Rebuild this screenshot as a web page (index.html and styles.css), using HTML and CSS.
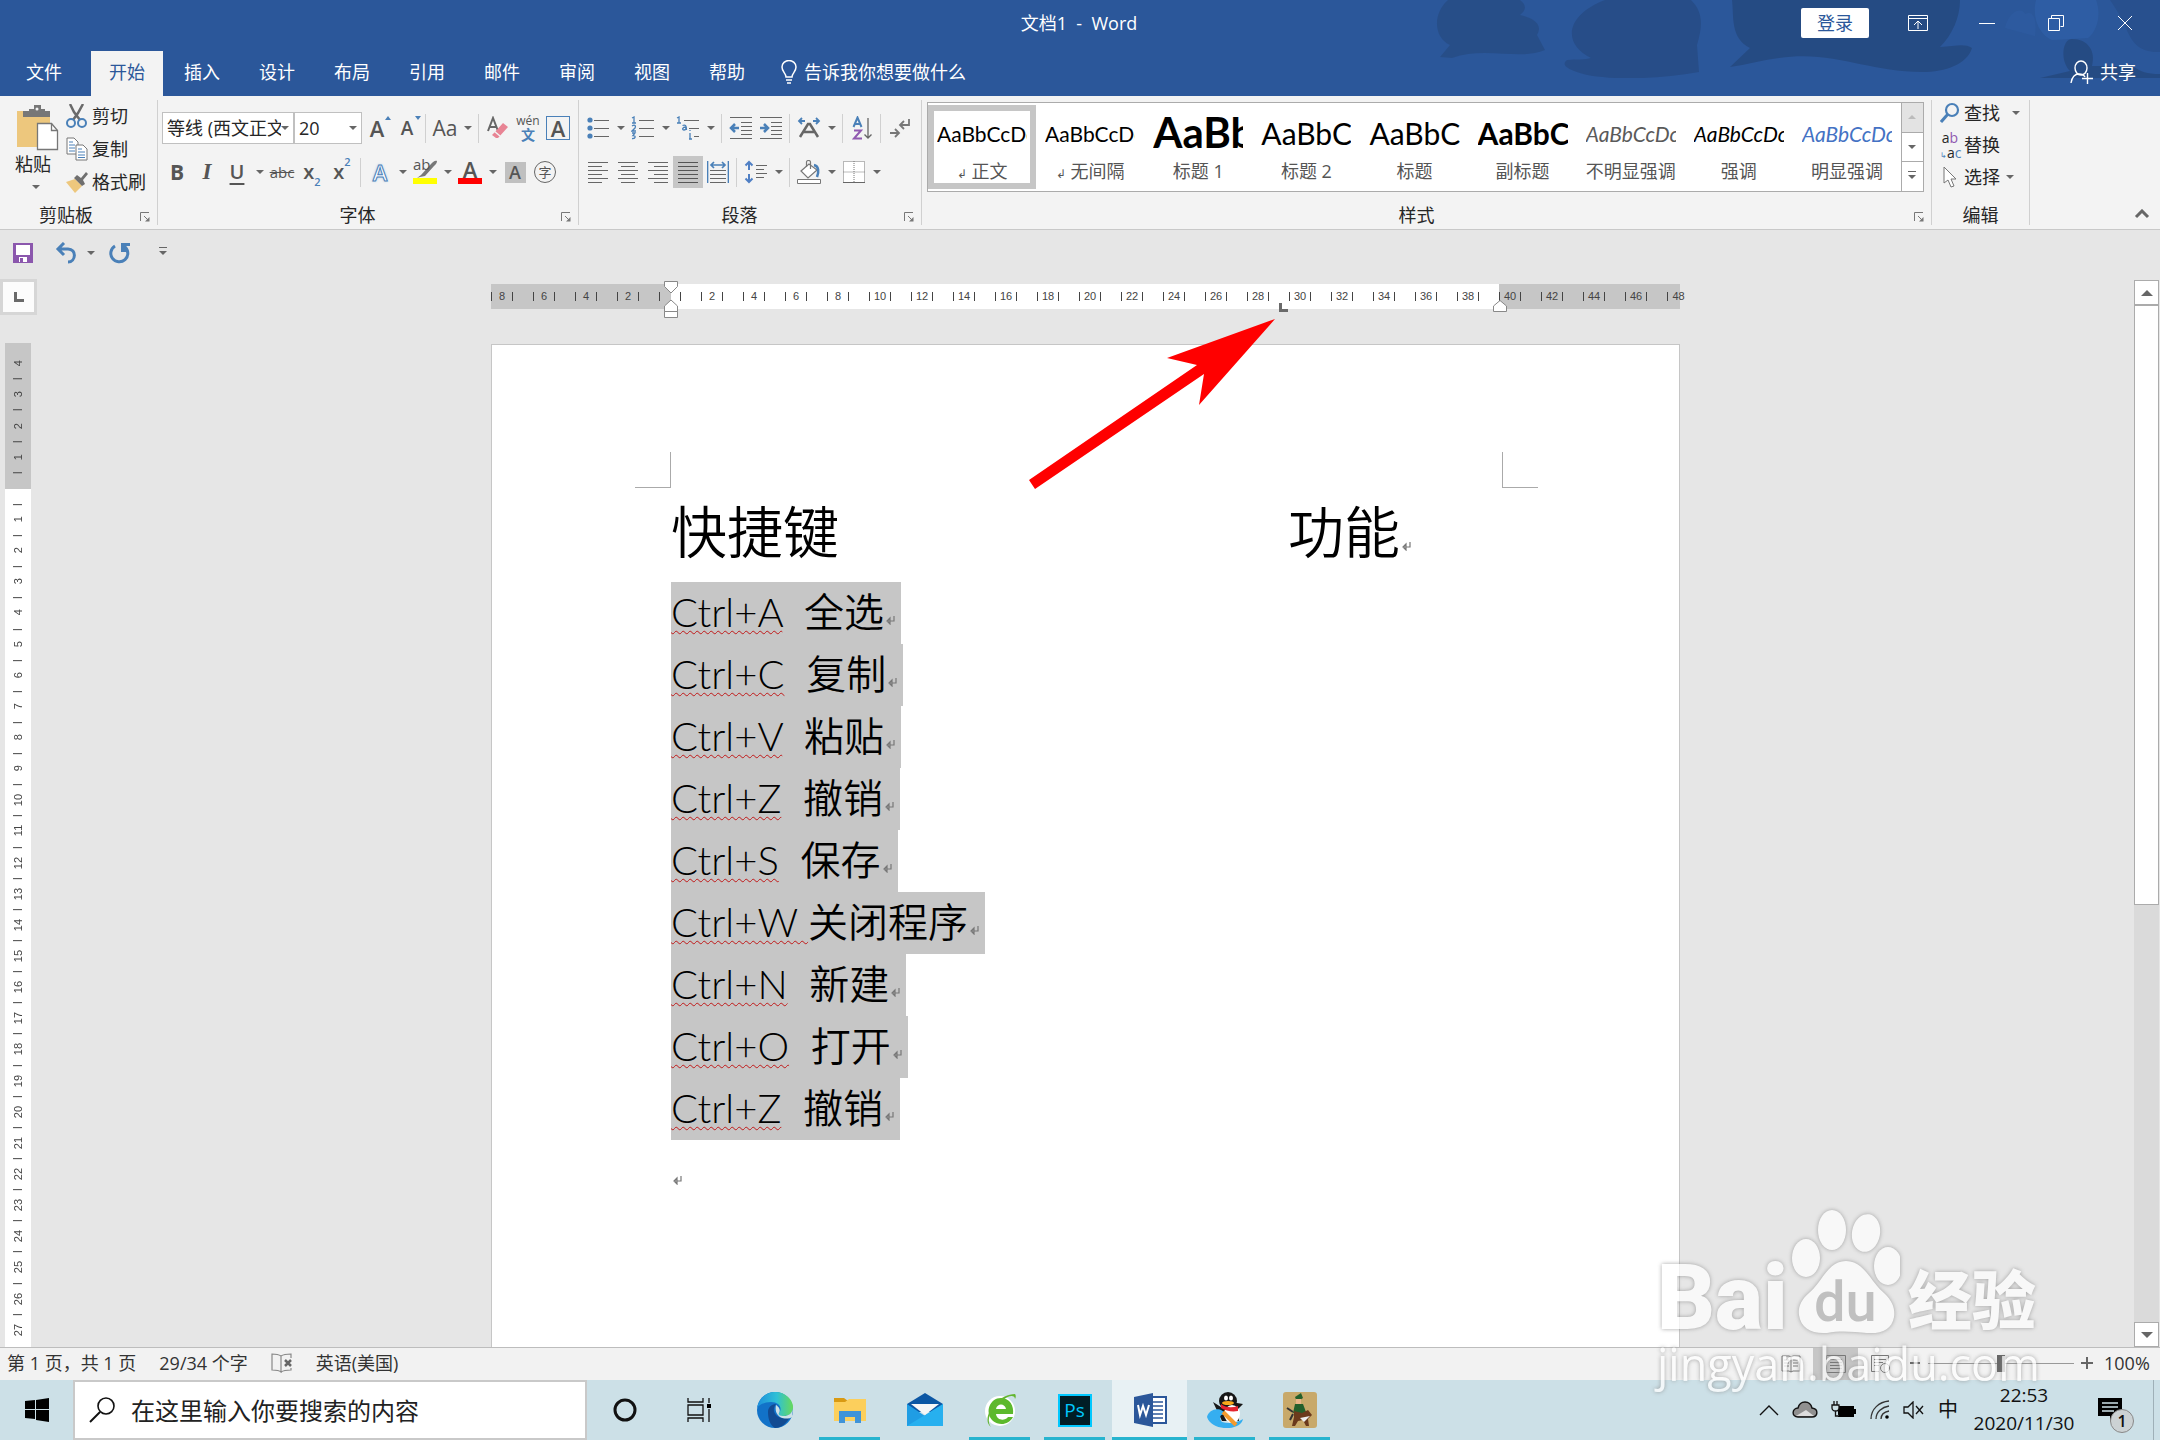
FILE: index.html
```html
<!DOCTYPE html>
<html lang="zh-CN">

<head>
    <meta charset="UTF-8">
    <meta name="viewport" content="width=device-width, initial-scale=1.0">
    <title>文档1 - Word</title>
    <link rel="stylesheet" href="styles.css">
</head>

<body>
    <svg class="defs" aria-hidden="true">
        <symbol id="mark" viewBox="0 0 9 9"><path d="M8 0v5H2M4 2L1 5l3 3z" fill="none" stroke="#777" stroke-width="1.2" /></symbol>
        <symbol id="launch" viewBox="0 0 10 10"><path d="M.5 9V.5H9M4 4l4 4" fill="none" stroke="#777" /><path d="M9.500 5v4.500H5z" fill="#777" /></symbol>
    </svg>

    <header class="top">
        <svg class="top-art" viewBox="0 0 730 78" aria-hidden="true">
            <g fill="#25497f">
                <path d="M18 0h72c8 6 5 11 0 15 18 4 22 12 17 20l8 15c-25 11-60-4-93 8l-12-1 10-12C4 38 2 14 18 0z" opacity=".75" />
                <path d="M175 0h86c12 12 12 25 6 45l2 27c-50 9-105 8-125-1-9-4-12-7-7-11 10-1 18 0 24-2C130 42 138 14 175 0z" opacity=".8" />
                <path d="M302 0h228c0 18-8 35-20 47 15-1 25-4 32 1-5 16-26 24-50 24-55 0-88-22-143-14-18 2-32 7-49 9l20-19C300 38 304 16 302 0z" />
                <path d="M642 39c16 0 24 12 20 27h40c10 6 14 8 28 8v4H610l30-7c-10-10-8-32 2-32z" />
                <path d="M680 0h50v52c-20 1-28-9-34-24-3-8-8-16-16-28z" opacity=".55" />
            </g>
            <path d="M606 0h60c6 16 0 32-8 38l-36 2c-14-6-20-24-16-40z" fill="#3162ab" opacity=".7" />
            <path d="M575 28c5-20 18-20 20-14 8-4 12 4 10 22z" fill="#3162ab" opacity=".4" />
        </svg>
        <div class="title-bar">
            <h1 class="window-title">文档1&nbsp; -&nbsp; Word</h1>
            <div class="window-tools">
                <button class="login">登录</button>
                <button class="win" aria-label="功能区显示选项"><svg width="20" height="16"><path d="M.5.500h19v15H.5zM.5 3.500h19M10 14V6M6 10l4-4 4 4" fill="none" stroke="#fff" /></svg></button>
                <button class="win" aria-label="最小化"><svg width="16" height="16"><path d="M0 8.500h16" stroke="#fff" /></svg></button>
                <button class="win" aria-label="还原"><svg width="16" height="16"><path d="M.5 3.500h11v12H.5zM3.500 3V.5h12v11h-3" fill="none" stroke="#fff" /></svg></button>
                <button class="win" aria-label="关闭"><svg width="16" height="16"><path d="M1 1l14 14M15 1L1 15" stroke="#fff" /></svg></button>
            </div>
        </div>
        <nav class="tabs">
            <a href="#" class="tab file">文件</a>
            <a href="#" class="tab active">开始</a>
            <a href="#" class="tab">插入</a>
            <a href="#" class="tab">设计</a>
            <a href="#" class="tab">布局</a>
            <a href="#" class="tab">引用</a>
            <a href="#" class="tab">邮件</a>
            <a href="#" class="tab">审阅</a>
            <a href="#" class="tab">视图</a>
            <a href="#" class="tab">帮助</a>
            <a href="#" class="tell"><svg width="18" height="24" viewBox="0 0 18 24"><path d="M6 17c0-4-4-5-4-10a7 6.500 0 0 1 14 0c0 5-4 6-4 10zM6 20h6M7 23h4" fill="none" stroke="#fff" stroke-width="1.500" /></svg>告诉我你想要做什么</a>
            <a href="#" class="share"><svg width="24" height="25" viewBox="0 0 24 25"><path d="M1 23c1-6 4-9 8-9 3 0 5 1 6 3" fill="none" stroke="#fff" stroke-width="1.400" /><ellipse cx="11" cy="8" rx="6" ry="7" fill="none" stroke="#fff" stroke-width="1.400" /><path d="M12 18.500h11M17.500 13v11" stroke="#fff" stroke-width="1.400" /></svg>共享</a>
        </nav>
    </header>

    <section class="ribbon">
        <div class="group clipboard">
            <div class="clip-body">
                <button class="paste">
                    <svg width="42" height="46" viewBox="0 0 42 46"><path d="M0 6h33v36H0z" fill="#edc77d" /><path d="M6 6h6V4h5V0h7v4h4v2h5v6H6z" fill="#777" /><circle cx="20" cy="4" r="1.500" fill="#f3f3f3" /><path d="M20.500 18.500h14l6 7v19h-20z" fill="#fff" stroke="#777" stroke-width="1.300" /><path d="M34.500 18.500v7h6" fill="none" stroke="#777" stroke-width="1.300" /></svg>
                    <span>粘贴</span>
                    <i class="caret"></i>
                </button>
                <div class="clip-list">
                    <button class="line-btn"><svg width="22" height="24" viewBox="0 0 22 24"><path d="M4 0l4 8 6 8M17 0l-5 9-5 7" stroke="#6a6a6a" stroke-width="2.500" fill="none" /><g fill="none" stroke="#4a80b8" stroke-width="2"><circle cx="5" cy="19" r="4" /><circle cx="16" cy="19" r="4" /></g></svg>剪切</button>
                    <button class="line-btn"><svg width="22" height="24" viewBox="0 0 22 24"><path d="M1 1h7l4 4v12H1z" fill="#fff" stroke="#777" /><path d="M3 5h4M3 8h6M3 11h6M3 14h6" stroke="#4a80b8" /><path d="M10 8h7l4 4v11H10z" fill="#fff" stroke="#777" /><path d="M12 12h4M12 15h7M12 18h7M12 20.500h7" stroke="#4a80b8" /></svg>复制</button>
                    <button class="line-btn"><svg width="22" height="24" viewBox="0 0 22 24"><path d="M0 12l9-3 7 7-7 7z" fill="#edc77d" /><path d="M8 8l3-3 4 3 5-6 2 2-5 6 2 4-3 2z" fill="#6f6f6f" /></svg>格式刷</button>
                </div>
            </div>
            <div class="group-foot"><span>剪贴板</span><button class="launcher" aria-label="剪贴板选项"><svg width="10" height="10"><use href="#launch" /></svg></button></div>
        </div>

        <div class="group font">
            <div class="row">
                <label class="combo wide"><select aria-label="字体"><option>等线 (西文正文)</option></select><i class="caret"></i></label>
                <label class="combo"><select aria-label="字号"><option>20</option></select><i class="caret"></i></label>
                <button class="ico" aria-label="增大字号"><span class="grow">A</span><i class="up"></i></button>
                <button class="ico" aria-label="减小字号"><span class="shrink">A</span><i class="down"></i></button>
                <i class="sep"></i>
                <button class="ico" aria-label="更改大小写"><span class="case">Aa</span></button><button class="drop" aria-label="大小写选项"><i class="caret"></i></button>
                <i class="sep"></i>
                <button class="ico" aria-label="清除格式"><svg width="22" height="24" viewBox="0 0 22 24"><path d="M1 15L6 2l5 13M3 11h6" fill="none" stroke="#666" stroke-width="2" /><path d="M7 17L16 7l5 4-10 11H9l-4-3z" fill="#e88494" /><path d="M7 15l6 5" stroke="#f3f3f3" stroke-width="1.500" /></svg></button>
                <button class="ico pinyin" aria-label="拼音指南"><span>wén</span><b>文</b></button>
                <button class="ico" aria-label="字符边框"><span class="boxed">A</span></button>
            </div>
            <div class="row">
                <button class="ico bold">B</button>
                <button class="ico italic">I</button>
                <button class="ico underline">U</button><button class="drop" aria-label="下划线选项"><i class="caret"></i></button>
                <button class="ico strike">abc</button>
                <button class="ico script">x<sub>2</sub></button>
                <button class="ico script">x<sup>2</sup></button>
                <i class="sep"></i>
                <button class="ico effect">A</button><button class="drop" aria-label="文本效果选项"><i class="caret"></i></button>
                <button class="ico mark-pen" aria-label="突出显示"><span>ab</span><svg width="24" height="24" viewBox="0 0 24 24"><path d="M8 15l10-11c2-2 4-4 6-3 0 2-1 3-3 5l-9 10-5 1-3 1z" fill="#777" /><path d="M0 18h24v6H0z" fill="#ff0" /></svg></button><button class="drop" aria-label="突出显示颜色"><i class="caret"></i></button>
                <button class="ico color">A</button><button class="drop" aria-label="字体颜色选项"><i class="caret"></i></button>
                <button class="ico"><span class="shaded">A</span></button>
                <button class="ico"><span class="circled">字</span></button>
            </div>
            <div class="group-foot"><span>字体</span><button class="launcher" aria-label="字体选项"><svg width="10" height="10"><use href="#launch" /></svg></button></div>
        </div>

        <div class="group para">
            <div class="row">
                <button class="ico" aria-label="项目符号"><svg width="24" height="24" viewBox="0 0 24 24"><g fill="#4a80b8"><circle cx="4" cy="4" r="2.600" /><circle cx="4" cy="12" r="2.600" /><circle cx="4" cy="20" r="2.600" /></g><path d="M8 4.500h15M8 12.500h15M8 20.500h15" stroke="#666" /></svg></button><button class="drop" aria-label="项目符号库"><i class="caret"></i></button>
                <button class="ico" aria-label="编号"><svg width="24" height="24" viewBox="0 0 24 24"><g fill="none" stroke="#4a80b8" stroke-width="1.300"><path d="M1 2l2-1v6M1 7h4M1 10c3-2 4 0 3 2l-3 3h4M1 17h3l-2 2.500c3 0 3 3.500-1 3" /></g><path d="M8 4.500h15M8 12.500h15M8 20.500h15" stroke="#666" /></svg></button><button class="drop" aria-label="编号库"><i class="caret"></i></button>
                <button class="ico" aria-label="多级列表"><svg width="24" height="24" viewBox="0 0 24 24"><g fill="none" stroke="#4a80b8" stroke-width="1.300"><path d="M1 2l2-1v6M1 7h4M6.500 9.500c3-1 4 0 4 4.500M10 11c-4 0-4 3-2 3 1 0 2-1 2-2M14 17v6M13 23h3M14 14v1" /></g><path d="M8 4.500h15M13 12.500h10M18 20.500h5" stroke="#666" /></svg></button><button class="drop" aria-label="多级列表库"><i class="caret"></i></button>
                <i class="sep"></i>
                <button class="ico" aria-label="减少缩进"><svg width="24" height="24" viewBox="0 0 24 24"><path d="M1 1.500h22M12 6.500h11M12 10.500h11M12 14.500h11M12 18.500h11M1 22.500h22" stroke="#666" /><path d="M10 12H3M6 8l-4 4 4 4" stroke="#4a80b8" stroke-width="2.500" fill="none" /></svg></button>
                <button class="ico" aria-label="增加缩进"><svg width="24" height="24" viewBox="0 0 24 24"><path d="M1 1.500h22M12 6.500h11M12 10.500h11M12 14.500h11M12 18.500h11M1 22.500h22" stroke="#666" /><path d="M1 12h7M5 8l4 4-4 4" stroke="#4a80b8" stroke-width="2.500" fill="none" /></svg></button>
                <i class="sep"></i>
                <button class="ico" aria-label="中文版式"><svg width="24" height="24" viewBox="0 0 24 24"><path d="M3 21l8-13h2l8 13M7 16h10" stroke="#666" stroke-width="2.500" fill="none" /><path d="M8 5H2M5 2L2 5l3 3M16 5h6M19 2l3 3-3 3" stroke="#4a80b8" stroke-width="1.800" fill="none" /></svg></button><button class="drop" aria-label="中文版式选项"><i class="caret"></i></button>
                <i class="sep"></i>
                <button class="ico" aria-label="排序"><svg width="20" height="24" viewBox="0 0 20 24"><path d="M1.500 11L5.500 1.500 9.500 11M3 8h5" stroke="#4a80b8" stroke-width="2" fill="none" /><path d="M2 14.500h7l-7 8h8" stroke="#9059b0" stroke-width="2" fill="none" /><path d="M16 2v20M12.500 18.500L16 22l3.500-3.500" stroke="#666" stroke-width="1.300" fill="none" /></svg></button>
                <i class="sep"></i>
                <button class="ico" aria-label="显示编辑标记"><svg width="22" height="24" viewBox="0 0 22 24"><path d="M20 3v6h-9M15 5l-4 4 4 4M1 17h9M6 13l4 4-4 4" stroke="#777" stroke-width="1.800" fill="none" /></svg></button>
            </div>
            <div class="row">
                <button class="ico" aria-label="左对齐"><svg width="20" height="22"><path d="M0 1.500h20M0 5.500h14M0 9.500h20M0 13.500h14M0 17.500h20M0 21.500h14" stroke="#666" /></svg></button>
                <button class="ico" aria-label="居中"><svg width="20" height="22"><path d="M0 1.500h20M3 5.500h14M0 9.500h20M3 13.500h14M0 17.500h20M3 21.500h14" stroke="#666" /></svg></button>
                <button class="ico" aria-label="右对齐"><svg width="20" height="22"><path d="M0 1.500h20M6 5.500h14M0 9.500h20M6 13.500h14M0 17.500h20M6 21.500h14" stroke="#666" /></svg></button>
                <button class="ico pressed" aria-label="两端对齐"><svg width="20" height="22"><path d="M0 1.500h20M0 5.500h20M0 9.500h20M0 13.500h20M0 17.500h20M0 21.500h20" stroke="#555" /></svg></button>
                <button class="ico" aria-label="分散对齐"><svg width="22" height="24" viewBox="0 0 22 24"><path d="M.5 1v22M21.500 1v22M4 5h14M7 2L4 5l3 3M15 2l3 3-3 3" stroke="#4a80b8" stroke-width="1.700" fill="none" /><path d="M3 10.500h16M3 14.500h16M3 18.500h16M3 22.500h16" stroke="#666" /></svg></button>
                <i class="sep"></i>
                <button class="ico" aria-label="行距"><svg width="24" height="24" viewBox="0 0 24 24"><path d="M5 2v8M5 14v8M1.500 5.500L5 2l3.500 3.500M1.500 18.500L5 22l3.500-3.500" stroke="#4f7fc4" stroke-width="2" fill="none" /><path d="M12 5.500h11M12 9.500h8M12 13.500h11M12 17.500h8" stroke="#666" /></svg></button><button class="drop" aria-label="行距选项"><i class="caret"></i></button>
                <i class="sep"></i>
                <button class="ico" aria-label="底纹"><svg width="24" height="24" viewBox="0 0 24 24"><path d="M4 11l8-7 8 6-9 8z" fill="#fff" stroke="#777" stroke-width="1.200" /><path d="M9.500 7V2c0-2 4-2 4 0v7" fill="none" stroke="#777" stroke-width="1.200" /><path d="M17 5c5 1 5 7 3 12" fill="none" stroke="#4a80b8" stroke-width="2.500" /><path d="M.5 19.500h23v4H.5z" fill="#fff" stroke="#777" /></svg></button><button class="drop" aria-label="底纹颜色"><i class="caret"></i></button>
                <button class="ico" aria-label="边框"><svg width="22" height="22"><path d="M.5.500h21v21H.5zM.5 11h21M11 0v22" fill="#fff" stroke="#777" stroke-dasharray="1 1" /><path d="M0 21.500h22" stroke="#666" /></svg></button><button class="drop" aria-label="边框选项"><i class="caret"></i></button>
            </div>
            <div class="group-foot"><span>段落</span><button class="launcher" aria-label="段落选项"><svg width="10" height="10"><use href="#launch" /></svg></button></div>
        </div>

        <div class="group styles">
            <div class="gallery">
                <button class="style selected"><span class="preview">AaBbCcDc</span><span class="name"><small>↲</small> 正文</span></button>
                <button class="style"><span class="preview">AaBbCcDc</span><span class="name"><small>↲</small> 无间隔</span></button>
                <button class="style"><span class="preview h1">AaBb</span><span class="name">标题 1</span></button>
                <button class="style"><span class="preview h2">AaBbC</span><span class="name">标题 2</span></button>
                <button class="style"><span class="preview h2">AaBbC</span><span class="name">标题</span></button>
                <button class="style"><span class="preview h2 strong">AaBbC</span><span class="name">副标题</span></button>
                <button class="style"><span class="preview em subtle">AaBbCcDc</span><span class="name">不明显强调</span></button>
                <button class="style"><span class="preview em">AaBbCcDc</span><span class="name">强调</span></button>
                <button class="style"><span class="preview em intense">AaBbCcDc</span><span class="name">明显强调</span></button>
                <div class="gallery-nav">
                    <button class="off" aria-label="上一行"><i class="up"></i></button>
                    <button aria-label="下一行"><i class="caret"></i></button>
                    <button aria-label="其他"><i class="caret lined"></i></button>
                </div>
            </div>
            <div class="group-foot"><span>样式</span><button class="launcher" aria-label="样式选项"><svg width="10" height="10"><use href="#launch" /></svg></button></div>
        </div>

        <div class="group editing">
            <div class="edit-list">
                <button class="line-btn"><svg width="20" height="22" viewBox="0 0 20 22"><circle cx="12" cy="8" r="6" fill="none" stroke="#4a80b8" stroke-width="2.200" /><path d="M8 12l-7 8" stroke="#4a80b8" stroke-width="3" /></svg>查找<i class="caret far"></i></button>
                <button class="line-btn"><span class="replace"><span>a<b>b</b></span><span><em>↳</em>a<em>c</em></span></span>替换</button>
                <button class="line-btn"><svg width="20" height="22" viewBox="0 0 20 22"><path d="M4 1v16l4-3 3 7 3-1-3-7h5z" fill="#fff" stroke="#777" /></svg>选择<i class="caret"></i></button>
            </div>
            <div class="group-foot"><span>编辑</span></div>
        </div>
        <div class="ribbon-end"><button aria-label="折叠功能区"><svg width="16" height="10"><path d="M2 8l6-6 6 6" stroke="#666" stroke-width="3" fill="none" /></svg></button></div>
    </section>

    <div class="quick">
        <button aria-label="保存"><svg width="20" height="20"><path d="M0 0h20v20H0z" fill="#8b57ad" /><path d="M3 2h14v10H3zM6 14h8v5H6z" fill="#fff" /><path d="M7 15h3v4H7z" fill="#8b57ad" /></svg></button>
        <button aria-label="撤消"><svg width="22" height="22" viewBox="0 0 22 22"><path d="M3 7h10c9 0 8 13 0 13M9 1L3 7l6 6" fill="none" stroke="#4a80b8" stroke-width="3" /></svg></button>
        <button class="drop" aria-label="撤消列表"><i class="caret"></i></button>
        <button aria-label="重复"><svg width="22" height="22" viewBox="0 0 22 22"><path d="M6 4a8.500 8.500 0 1 0 10 1" fill="none" stroke="#4a80b8" stroke-width="3" /><path d="M12 1h9v3h-4l3 6h-8z" fill="#4a80b8" /></svg></button>
        <button class="custom" aria-label="自定义快速访问工具栏"><i class="caret lined"></i></button>
    </div>

    <main class="work">
        <div class="left-col">
            <button class="tab-kind" aria-label="制表符类型"><svg width="10" height="10"><path d="M0 0h3v7h7v3H0z" fill="#6a6a6a" /></svg></button>
            <div class="v-ruler">
                <div class="v-margin"><span>4</span><span>3</span><span>2</span><span>1</span></div>
                <div class="v-body"><span>1</span><span>2</span><span>3</span><span>4</span><span>5</span><span>6</span><span>7</span><span>8</span><span>9</span><span>10</span><span>11</span><span>12</span><span>13</span><span>14</span><span>15</span><span>16</span><span>17</span><span>18</span><span>19</span><span>20</span><span>21</span><span>22</span><span>23</span><span>24</span><span>25</span><span>26</span><span>27</span></div>
            </div>
        </div>

        <div class="canvas">
            <div class="h-ruler">
                <span>8</span><span>6</span><span>4</span><span>2</span><span></span><span>2</span><span>4</span><span>6</span><span>8</span><span>10</span><span>12</span><span>14</span><span>16</span><span>18</span><span>20</span><span>22</span><span>24</span><span>26</span><span>28</span><span>30</span><span>32</span><span>34</span><span>36</span><span>38</span><span>40</span><span>42</span><span>44</span><span>46</span><span>48</span>
                <svg class="indent" width="14" height="38" viewBox="0 0 14 38"><path d="M.5.500h13v5L7 12 .5 5.500zM.5 30.500V25L7 19l6.500 6v5.500zM.5 30.500h13v6H.5z" fill="#fff" stroke="#888" /></svg>
                <svg class="tab-stop" width="9" height="9"><path d="M0 0h3v6h6v3H0z" fill="#6a6a6a" /></svg>
                <svg class="indent-right" width="14" height="12"><path d="M.5 11.500V6L7 .5 13.500 6v5.500z" fill="#fff" stroke="#888" /></svg>
            </div>
            <article class="page">
                <i class="corner left"></i>
                <i class="corner right"></i>
                <h2 class="heads"><span>快捷键</span><span>功能<svg width="9" height="9"><use href="#mark" /></svg></span></h2>
                <ul class="keys">
                    <li><u>Ctrl+A</u>&nbsp; 全选<svg width="9" height="9"><use href="#mark" /></svg></li>
                    <li><u>Ctrl+C</u>&nbsp; 复制<svg width="9" height="9"><use href="#mark" /></svg></li>
                    <li><u>Ctrl+V</u>&nbsp; 粘贴<svg width="9" height="9"><use href="#mark" /></svg></li>
                    <li><u>Ctrl+Z</u>&nbsp; 撤销<svg width="9" height="9"><use href="#mark" /></svg></li>
                    <li><u>Ctrl+S</u>&nbsp; 保存<svg width="9" height="9"><use href="#mark" /></svg></li>
                    <li><u>Ctrl+W&nbsp;</u>关闭程序<svg width="9" height="9"><use href="#mark" /></svg></li>
                    <li><u>Ctrl+N</u>&nbsp; 新建<svg width="9" height="9"><use href="#mark" /></svg></li>
                    <li><u>Ctrl+O</u>&nbsp; 打开<svg width="9" height="9"><use href="#mark" /></svg></li>
                    <li><u>Ctrl+Z</u>&nbsp; 撤销<svg width="9" height="9"><use href="#mark" /></svg></li>
                </ul>
                <p class="empty"><svg width="9" height="9"><use href="#mark" /></svg></p>
                <svg class="arrow" width="250" height="176" viewBox="0 0 250 176"><path d="M246 1L138 40l30 7L0 162l6 9L175 56l-5 31z" fill="#f00" /></svg>
            </article>
        </div>

        <div class="scroll">
            <button aria-label="向上滚动"><i class="up"></i></button>
            <div class="track"><div class="thumb"></div></div>
            <button aria-label="向下滚动"><i class="down"></i></button>
        </div>
    </main>

    <footer class="status">
        <span>第 1 页，共 1 页</span>
        <span>29/34 个字</span>
        <button aria-label="校对"><svg width="22" height="20"><path d="M10 3c-3-2-6-2-9-2v16c4 0 7 0 9 2zM10 3c3-2 6-2 10-2v4M20 15v2c-4 0-7 0-10 2" fill="none" stroke="#888" stroke-width="1.200" /><path d="M14 7l6 6M20 7l-6 6" stroke="#666" stroke-width="2.500" /></svg></button>
        <span>英语(美国)</span>
        <div class="views">
            <button aria-label="阅读视图"><svg width="20" height="18"><path d="M1 1h7l2 1 2-1h7v15h-7l-2 1-2-1H1zM10 2v15M3 5h5M3 8h5M3 11h5M12 5h5M12 8h5M12 11h5" fill="none" stroke="#777" /></svg></button>
            <button class="on" aria-label="页面视图"><svg width="20" height="18"><path d="M.5.500h19v17H.5zM4 4.500h12M4 7.500h12M4 10.500h12M4 13.500h12" fill="none" stroke="#777" /></svg></button>
            <button aria-label="Web 版式视图"><svg width="20" height="18"><path d="M8 16.500H.5V.5h17V6M3 4.500h12M3 7.500h9M3 10.500h5" fill="none" stroke="#777" /><circle cx="14" cy="13" r="4.500" fill="none" stroke="#777" /></svg></button>
        </div>
        <div class="zoom">
            <button aria-label="缩小"><svg width="12" height="12"><path d="M1 6h10" stroke="#666" stroke-width="2" /></svg></button>
            <input type="range" min="0" max="100" value="50" aria-label="缩放">
            <button aria-label="放大"><svg width="12" height="12"><path d="M0 6h12M6 0v12" stroke="#666" stroke-width="2" /></svg></button>
            <span>100%</span>
        </div>
    </footer>

    <div class="taskbar">
        <button class="start" aria-label="开始菜单"><svg width="24" height="24"><path d="M0 3l10-1v9H0zM11 2l13-2v11H11zM0 12h10v9L0 20zM11 12h13v12l-13-2z" /></svg></button>
        <label class="search"><svg width="26" height="26"><circle cx="17" cy="9" r="8" fill="none" stroke="#111" stroke-width="1.600" /><path d="M11 15L1 25" stroke="#111" stroke-width="2" /></svg><input type="text" placeholder="在这里输入你要搜索的内容" aria-label="搜索"></label>
        <button class="app" aria-label="Cortana"><svg width="26" height="26"><circle cx="13" cy="13" r="10" fill="none" stroke="#111" stroke-width="3" /></svg></button>
        <button class="app" aria-label="任务视图"><svg width="26" height="26"><path d="M1 1v4h15V1M1 25v-4h15v4M1 8h15v10H1zM22 1v5M22 12v13" fill="none" stroke="#111" stroke-width="1.300" /><path d="M20 7h4v4h-4z" /></svg></button>
        <button class="app" aria-label="Edge"><svg width="36" height="36" viewBox="0 0 36 36">
                <defs><linearGradient id="edge" x1="0" x2="1"><stop offset="0" stop-color="#1d8fdc" /><stop offset=".55" stop-color="#2fc0d6" /><stop offset="1" stop-color="#68da5a" /></linearGradient></defs>
                <circle cx="18" cy="18" r="18" fill="#1272c8" />
                <path d="M0 16C2 6 9 0 18 0c11 0 18 8 18 15 0 6-4 9-9 9-4 0-6-1-5-3 4-5 0-11-8-11C7 10 2 13 0 16z" fill="url(#edge)" />
                <path d="M11 20c0-4 3-8 8-8-3 4-3 8 1 12 4 3 9 2 13 1-4 7-9 11-15 11-5-3-7-9-7-16z" fill="#124b92" />
                <path d="M19 13c-1 5 0 9 4 12 4 2 9 2 12 0l1-9c-1 6-5 8-9 8-4 0-6-1-5-3 2-3 0-6-3-8z" fill="#cde1e7" />
            </svg></button>
        <button class="app open" aria-label="文件资源管理器"><svg width="34" height="34" viewBox="0 0 34 34"><path d="M1 5h10l4 3v5H1z" fill="#d99a13" /><path d="M1 9h11l4-3h17v22H1z" fill="#fccf5c" /><path d="M6 18h22v12h-6v-6H12v6H6z" fill="#3f93d8" /></svg></button>
        <button class="app" aria-label="邮件"><svg width="36" height="36" viewBox="0 0 36 36"><path d="M0 12L18 1l18 11v8H0z" fill="#0c57a4" /><path d="M0 12l18 12 18-12v22H0z" fill="#1f9de4" /><path d="M0 34l36-22v22z" fill="#27b0ef" /><path d="M4 12h28L18 23z" fill="#f7f7f7" /></svg></button>
        <button class="app open" aria-label="浏览器"><svg width="36" height="36" viewBox="0 0 36 36"><circle cx="18" cy="19" r="15" fill="#fff" /><path d="M31 22H14c1 7 9 7 12 3h5c-4 8-14 9-20 4C2 20 8 6 19 6c9 0 13 8 12 16zM14 17h10c-1-6-9-6-10 0z" fill="#5cb92c" /><path d="M9 35C-2 27 15 2 33 2c1 1 1 3 0 5 0-4-6-4-12 1C10 16 3 27 9 35z" fill="#63b62f" /></svg></button>
        <button class="app open" aria-label="Photoshop"><span class="ps">Ps</span></button>
        <button class="app open current" aria-label="Word"><svg width="34" height="34" viewBox="0 0 34 34"><path d="M17 4h16v26H17z" fill="#fff" stroke="#2b579a" stroke-width="2" /><path d="M18 9h12M18 13h12M18 17h12M18 21h12M18 25h12" stroke="#2b579a" stroke-width="1.500" /><path d="M1 4l19-4v34L1 30z" fill="#2b579a" /><path d="M5 12l2 10 3-9 3 9 3-10" fill="none" stroke="#fff" stroke-width="2" /></svg></button>
        <button class="app open" aria-label="QQ"><svg width="38" height="36" viewBox="0 0 38 36"><path d="M7 10l8 5 3-4h13l6 1-6 6 2 11H16z" fill="#171717" /><ellipse cx="22" cy="9" rx="9" ry="9" fill="#171717" /><ellipse cx="26" cy="22" rx="8" ry="9" fill="#fff" /><path d="M15 12c5 4 11 4 17 2v5c-6 1-12 0-17-3z" fill="#e42531" /><ellipse cx="20" cy="6" rx="2" ry="2.500" fill="#fff" /><ellipse cx="25" cy="6" rx="2" ry="2.500" fill="#fff" /><ellipse cx="22" cy="11" rx="6" ry="2" fill="#f9a91b" /><path d="M1 25c2-9 15-11 19-2-5-2-8 2-4 7 7 2 15 1 21-3-2 12-31 13-36-2z" fill="#35aef0" /><path d="M17 20l13 13" stroke="#f39a2d" stroke-width="4" /></svg></button>
        <button class="app open" aria-label="游戏"><svg width="34" height="36" viewBox="0 0 34 36"><rect width="34" height="36" rx="3" fill="#c8a96a" /><path d="M12 5l6-4 2 5-6 4zM12 12h8l3 8-7 3-6-2z" fill="#24602b" /><path d="M13 7h5v5h-5z" fill="#e9b588" /><path d="M11 19l8 2 6-3 4 5-4 4 1 7h-3l-3-6-5 1-3 5h-3l2-9z" fill="#6b3a1c" /><path d="M17 26l10-2-6 6z" fill="#eee" /><path d="M4 16l6 4M10 22l-3 6" stroke="#333" stroke-width="2" /></svg></button>

        <div class="tray">
            <button aria-label="显示隐藏的图标"><svg width="20" height="12"><path d="M1 11l9-9 9 9" fill="none" stroke="#111" stroke-width="1.400" /></svg></button>
            <button aria-label="OneDrive"><svg width="26" height="18"><path d="M6 16c-7 0-6-9 0-9 2-8 12-8 14 0 7 1 6 9 0 9z" fill="#909090" stroke="#111" stroke-width="1.400" /><path d="M4 15l10-6 8 6z" fill="#ddd" /></svg></button>
            <button aria-label="电源"><svg width="26" height="18"><path d="M7 5h16v3h2v5h-2v3H7z" /><path d="M3 0v4M6 0v4M1 4h7v3c0 4-7 4-7 0zM4.500 10v5H8" fill="#cde1e7" stroke="#111" stroke-width="1.300" /></svg></button>
            <button aria-label="网络"><svg width="20" height="20"><path d="M1 19C1 9 9 2 19 1M6 19c0-7 6-12 13-13M11 19c0-4 3-7 8-8" fill="none" stroke="#333" stroke-width="1.300" /><circle cx="17" cy="17" r="1.800" /></svg></button>
            <button aria-label="音量"><svg width="22" height="18"><path d="M1 6h4l5-5v16l-5-5H1zM13 5l7 8M20 5l-7 8" fill="none" stroke="#111" stroke-width="1.300" /></svg></button>
            <button class="ime">中</button>
            <button class="clock"><span>22:53</span><span>2020/11/30</span></button>
            <button class="notice" aria-label="通知"><svg width="24" height="24"><path d="M0 0h24v18h-7l-5 6v-6H0z" /><path d="M4 5h16M4 9h16M4 13h12" stroke="#cde1e7" stroke-width="1.300" /></svg><span class="badge">1</span></button>
        </div>
    </div>

    <div class="brand">
        <div class="brand-row">
            <span class="brand-latin">Bai</span>
            <span class="paw"><svg width="114" height="132" viewBox="0 0 114 132"><g fill="#fff"><ellipse cx="20" cy="50" rx="14" ry="19" /><ellipse cx="46" cy="22" rx="14" ry="20" /><ellipse cx="80" cy="25" rx="14" ry="19" transform="rotate(10 80 25)" /><ellipse cx="102" cy="58" rx="14" ry="19" /><path d="M60 53c18 0 24 20 38 32 10 9 11 18 10 24-2 12-12 17-27 16-12-1-26-3-40 0-16 1-26-5-28-18-1-8 2-15 10-22 14-12 19-32 37-32z" /></g></svg><span>du</span></span>
            <span class="brand-cn">经验</span>
        </div>
        <span class="brand-url">jingyan.baidu.com</span>
    </div>
</body>

</html>
```

FILE: styles.css
```css
* {
    box-sizing: border-box;
}

body {
    margin: 0;
    height: 100vh;
    display: flex;
    flex-direction: column;
    position: relative;
    overflow: hidden;
    background-color: #e6e6e6;
    color: #262626;
    font-family: "Open Sans", "Noto Sans CJK SC", sans-serif;
    font-size: 18px;
    line-height: 24px;
}

button,
input,
select {
    font: inherit;
    color: inherit;
    margin: 0;
    padding: 0;
    border: 0;
    background: none;
}

svg {
    display: block;
    flex: none;
}

a {
    color: inherit;
    text-decoration: none;
}

.defs {
    position: absolute;
    width: 0;
    height: 0;
}

/* arrows */
.caret,
.down,
.up {
    display: block;
    flex: none;
    width: 0;
    border: 4px solid transparent;
    border-top: 4px solid #666;
    border-bottom: 0;
}

.up {
    border-top: 0;
    border-bottom: 4px solid #666;
}

.caret.lined {
    position: relative;
}

.caret.lined::before {
    content: "";
    position: absolute;
    left: -4px;
    top: -8px;
    width: 8px;
    height: 1px;
    background-color: #666;
}

/* title and tabs */
.top {
    position: relative;
    flex: none;
    background-color: #2b579a;
    color: white;
}

.top-art {
    position: absolute;
    right: 0;
    top: 0;
    width: 730px;
    height: 78px;
    opacity: 0.85;
}

.title-bar {
    position: relative;
    height: 51px;
}

.window-title {
    margin: 0;
    padding: 11px 2px 0 0;
    text-align: center;
    font-size: 18px;
    font-weight: normal;
}

.window-tools {
    position: absolute;
    right: 1px;
    top: 0;
    display: flex;
    align-items: center;
    height: 46px;
}

.login {
    width: 68px;
    height: 30px;
    margin-right: 14px;
    border-radius: 2px;
    background-color: white;
    color: #2b579a;
}

.win {
    width: 69px;
    height: 46px;
    display: flex;
    align-items: center;
    justify-content: center;
}

.tabs {
    position: relative;
    display: flex;
    gap: 3px;
    height: 45px;
    line-height: 42px;
}

.tab {
    padding: 0 18px;
}

.tab.file {
    width: 88px;
    padding-left: 26px;
}

.tab.active {
    background-color: #f3f3f3;
    color: #2b579a;
}

.tell,
.share {
    display: flex;
    align-items: center;
    gap: 6px;
    height: 42px;
    padding-left: 14px;
}

.share {
    margin-left: auto;
    margin-right: 24px;
}

/* ribbon */
.ribbon {
    flex: none;
    display: flex;
    height: 134px;
    background-color: #f3f3f3;
    border-bottom: 1px solid #c8c8c8;
}

.group {
    flex: none;
    display: flex;
    flex-direction: column;
    margin: 4px 0;
    border-right: 1px solid #d0d0d0;
}

.group-foot {
    display: flex;
    align-items: center;
    height: 24px;
    margin-top: auto;
    margin-bottom: -3px;
    padding-bottom: 2px;
    text-align: center;
}

.group-foot span {
    flex: 1;
}

.launcher {
    width: 25px;
    padding: 4px 0 0 8px;
}

.clipboard {
    width: 158px;
}

.clip-body {
    display: flex;
    padding-top: 2px;
}

.paste {
    width: 66px;
    display: flex;
    flex-direction: column;
    align-items: center;
    padding: 3px 0 0 6px;
}

.paste span {
    margin: 1px 6px 9px 0;
}

.paste svg {
    margin-left: 4px;
}

.line-btn {
    display: flex;
    align-items: center;
    gap: 4px;
    height: 32px;
    white-space: nowrap;
}

.clip-list {
    margin-top: -3px;
}

.clip-list .line-btn {
    height: 33px;
}

.font {
    width: 421px;
    padding: 12px 0 0 4px;
}

.para {
    width: 343px;
    padding: 12px 0 0 4px;
}

.row {
    display: flex;
    align-items: center;
    height: 32px;
    margin-bottom: 12px;
}

.combo {
    width: 68px;
    height: 32px;
    display: flex;
    align-items: center;
    background-color: white;
    border: 1px solid #c0c0c0;
    padding: 0 4px;
}

.combo.wide {
    width: 132px;
}

.combo select {
    flex: 1;
    min-width: 0;
    height: 30px;
    appearance: none;
    outline: none;
    overflow: hidden;
}

.sep {
    width: 1px;
    height: 29px;
    margin: 0 4px 0 3px;
    background-color: #d0d0d0;
}

.ico {
    position: relative;
    width: 30px;
    height: 32px;
    display: flex;
    align-items: center;
    justify-content: center;
    color: #555;
}

.drop {
    width: 15px;
    height: 32px;
    display: flex;
    align-items: center;
    justify-content: center;
}

.ico.pressed {
    background-color: #c6c6c6;
}

.ico .up,
.ico .down {
    position: absolute;
    right: 1px;
    top: 4px;
    border-top-color: #4a80b8;
    border-bottom-color: #4a80b8;
    border-left-width: 3px;
    border-right-width: 3px;
}

.ico .up {
    border-top-color: transparent;
}

.grow,
.shrink,
.case {
    font-weight: 600;
    font-size: 22px;
}

.shrink {
    font-size: 19px;
}

.case {
    font-size: 21px;
    font-weight: normal;
}

.pinyin {
    flex-direction: column;
    font-size: 12px;
    line-height: 13px;
}

.pinyin b {
    font-size: 14px;
    line-height: 16px;
    color: #4a80b8;
}

.boxed {
    width: 24px;
    height: 24px;
    border: 1px solid #4a80b8;
    font-size: 22px;
    line-height: 22px;
    font-weight: 600;
}

.bold {
    font-weight: bold;
    font-size: 21px;
}

.italic {
    font-family: "Liberation Serif", serif;
    font-style: italic;
    font-weight: bold;
    font-size: 23px;
}

.underline {
    font-weight: 600;
    text-decoration: underline;
    text-underline-offset: 4px;
    font-size: 20px;
}

.strike {
    text-decoration: line-through;
    font-size: 15px;
}

.script {
    font-weight: 600;
    font-size: 20px;
}

.script sub,
.script sup {
    color: #4a80b8;
    font-size: 11px;
    line-height: 12px;
    align-self: flex-end;
}

.script sup {
    align-self: flex-start;
}

.effect {
    color: white;
    font-size: 22px;
    font-weight: 600;
    -webkit-text-stroke: 1px #4a80b8;
    text-shadow: 0 0 3px #8fb8e6;
}

.mark-pen span {
    position: absolute;
    left: 3px;
    top: 0;
    font-size: 15px;
    line-height: 16px;
}

.color {
    font-weight: 600;
    font-size: 22px;
    line-height: 22px;
    padding-bottom: 6px;
}

.color::after {
    content: "";
    position: absolute;
    left: 3px;
    bottom: 4px;
    width: 24px;
    height: 6px;
    background-color: red;
}

.shaded {
    width: 21px;
    height: 21px;
    background-color: #c0c0c0;
    font-weight: 600;
    line-height: 21px;
}

.circled {
    width: 22px;
    height: 22px;
    border: 1px solid #666;
    border-radius: 50%;
    font-size: 13px;
    line-height: 20px;
}

.styles {
    flex: 1;
    min-width: 0;
    padding: 2px 7px 0 5px;
}

.styles .group-foot {
    margin-right: -7px;
}

.gallery {
    display: flex;
    height: 90px;
    background-color: white;
    border: 1px solid #ababab;
    border-right: 0;
}

.style {
    flex: 1;
    min-width: 0;
    display: flex;
    flex-direction: column;
    margin: 2px 0;
    padding: 3px;
    border: 6px solid white;
    font-family: Lato, "Noto Sans CJK SC", sans-serif;
}

.style.selected {
    border-color: #c6c6c6;
}

.preview {
    flex: none;
    width: 100%;
    height: 40px;
    overflow: hidden;
    white-space: nowrap;
    text-align: left;
    color: black;
    font-size: 21px;
    line-height: 40px;
}

.preview.h1 {
    font-size: 42px;
    line-height: 36px;
    font-weight: bold;
}

.preview.h2 {
    font-size: 30px;
    line-height: 38px;
}

.preview.strong {
    font-weight: bold;
}

.preview.em {
    font-style: italic;
}

.preview.subtle {
    color: #5a5a5a;
}

.preview.intense {
    color: #4472c4;
}

.name {
    flex: none;
    align-self: stretch;
    height: 22px;
    margin: 6px -6px 0;
    color: #555;
    text-align: center;
    white-space: nowrap;
    font-family: "Open Sans", "Noto Sans CJK SC", sans-serif;
    line-height: 22px;
}

.name small {
    font-size: 12px;
    line-height: 12px;
}

.gallery-nav {
    width: 23px;
    display: flex;
    flex-direction: column;
}

.gallery-nav button {
    flex: 1;
    display: flex;
    align-items: center;
    justify-content: center;
    border: 1px solid #ababab;
    border-width: 0 1px 1px;
}

.gallery-nav button:last-child {
    border-bottom: 0;
}

.gallery-nav .off {
    background-color: #e3e3e3;
}

.gallery-nav .off .up {
    border-bottom-color: #bbb;
}

.editing {
    width: 98px;
}

.edit-list {
    padding-left: 8px;
    margin-top: -3px;
}

.edit-list .line-btn .caret {
    margin-left: 2px;
}

.edit-list .line-btn .caret.far {
    margin-left: 8px;
}

.replace {
    width: 20px;
    font-size: 14px;
    line-height: 15px;
    display: flex;
    flex-direction: column;
}

.replace b {
    color: #9059b0;
    font-weight: normal;
}

.replace em {
    color: #4a80b8;
    font-style: normal;
}

.replace em:first-child {
    font-size: 8px;
    line-height: 8px;
}

.ribbon-end {
    flex: none;
    width: 130px;
    display: flex;
    align-items: flex-end;
    justify-content: flex-end;
    padding: 0 10px 10px 0;
}

/* quick access */
.quick {
    flex: none;
    display: flex;
    align-items: center;
    height: 46px;
    padding-left: 13px;
}

.quick button {
    margin-right: 22px;
}

.quick .drop {
    width: 16px;
    margin: 0 10px 0 -16px;
}

.quick .custom {
    margin-left: 6px;
}

/* document area */
.work {
    flex: 1;
    min-height: 0;
    display: grid;
    grid-template-columns: 37px 1fr 26px;
}

.left-col {
    display: flex;
    flex-direction: column;
    padding-top: 3px;
    min-height: 0;
}

.tab-kind {
    flex: none;
    width: 37px;
    height: 36px;
    display: flex;
    align-items: center;
    justify-content: center;
    background-color: #fcfcfc;
    border: 3px solid #d6d6d6;
}

.v-ruler {
    flex: 1;
    width: 26px;
    margin: 28px 0 0 5px;
    display: flex;
    flex-direction: column;
    font-family: "Liberation Sans", Arial, sans-serif;
    font-size: 11px;
    line-height: 12px;
    color: #444;
}

.v-margin,
.v-body {
    display: flex;
    flex-direction: column;
}

.v-margin {
    height: 146px;
    padding: 5px 0 16px;
    background-color: #c6c6c6;
}

.v-body {
    flex: 1;
    padding: 15px 0 2px;
    background-color: white;
}

.v-ruler span {
    flex: 1;
    width: 26px;
    display: flex;
    align-items: center;
    justify-content: center;
    writing-mode: vertical-rl;
    transform: rotate(180deg);
    background: linear-gradient(#444, #444) center bottom / 9px 1px no-repeat;
}

.v-margin span {
    background-position: center top;
}

.canvas {
    display: flex;
    flex-direction: column;
    align-items: center;
    padding-top: 8px;
}

.h-ruler {
    position: relative;
    flex: none;
    display: flex;
    align-items: center;
    gap: 20px;
    width: 1189px;
    height: 25px;
    background: linear-gradient(to right, #c6c6c6 180px, white 180px, white 1008px, #c6c6c6 1008px);
    font-family: "Liberation Sans", Arial, sans-serif;
    font-size: 11px;
    line-height: 9px;
    color: #444;
}

.h-ruler span {
    flex: none;
    width: 22px;
    height: 9px;
    text-align: center;
    border-left: 1px solid #444;
    border-right: 1px solid #444;
}

.h-ruler span:nth-of-type(29) {
    border-right: 0;
}

.indent {
    position: absolute;
    left: 173px;
    top: -3px;
}

.tab-stop {
    position: absolute;
    left: 788px;
    bottom: -3px;
}

.indent-right {
    position: absolute;
    left: 1002px;
    bottom: -3px;
}

.page {
    position: relative;
    flex: 1;
    width: 1189px;
    margin-top: 35px;
    padding: 151px 0 0 179px;
    background-color: white;
    border: 1px solid #c6c6c6;
    border-bottom: 0;
    color: black;
    font-family: Lato, "Noto Sans CJK SC", sans-serif;
    font-weight: 350;
}

.corner {
    position: absolute;
    top: 107px;
    width: 36px;
    height: 36px;
    border-bottom: 1px solid #aaa;
}

.corner.left {
    left: 143px;
    border-right: 1px solid #aaa;
}

.corner.right {
    right: 141px;
    border-left: 1px solid #aaa;
}

.page svg {
    display: inline-block;
}

.heads {
    display: flex;
    margin: 0;
    font-size: 56px;
    line-height: 72px;
    font-weight: 350;
}

.heads span:first-child {
    width: 617px;
}

.keys {
    list-style: none;
    margin: 14px 0 0;
    padding: 0;
    font-size: 40px;
    line-height: 60px;
}

.keys li {
    width: fit-content;
    height: 62px;
    padding-right: 6px;
    background-color: #c6c6c6;
}

.keys svg,
.heads svg {
    margin-left: 2px;
    vertical-align: 2px;
}

.keys u {
    text-decoration: underline wavy #c01818 1px;
    text-underline-offset: 3px;
    text-decoration-skip-ink: none;
}

.empty {
    margin: 26px 0 0 2px;
}

.page .arrow {
    position: absolute;
    left: 537px;
    top: -27px;
}

.scroll {
    display: flex;
    flex-direction: column;
    padding-top: 4px;
}

.scroll button {
    width: 25px;
    height: 25px;
    display: flex;
    align-items: center;
    justify-content: center;
    background-color: white;
    border: 1px solid #ababab;
}

.scroll .up,
.scroll .down {
    border-left-width: 6px;
    border-right-width: 6px;
    border-top-width: 6px;
}

.scroll .up {
    border-top-width: 0;
    border-bottom-width: 6px;
}

.track {
    flex: 1;
    width: 25px;
    background-color: #dadada;
}

.thumb {
    height: 59%;
    background-color: white;
    border: 1px solid #ababab;
}

/* status bar */
.status {
    flex: none;
    display: flex;
    align-items: center;
    gap: 23px;
    height: 33px;
    padding: 0 6px 2px 7px;
    background-color: #f2f2f2;
    border-top: 1px solid #bdbdbd;
    color: #333;
}

.views {
    display: flex;
    height: 32px;
    margin: 0 0 -2px auto;
}

.views button {
    width: 45px;
    display: flex;
    align-items: center;
    justify-content: center;
}

.views .on {
    background-color: #c6c6c6;
}

.zoom {
    display: flex;
    align-items: center;
    gap: 7px;
    margin-left: -17px;
}

.zoom span {
    width: 50px;
    margin-left: 4px;
}

.zoom input {
    width: 146px;
    height: 18px;
    appearance: none;
    background: linear-gradient(#999, #999) center / 100% 1px no-repeat;
}

.zoom input::-webkit-slider-thumb {
    appearance: none;
    width: 8px;
    height: 17px;
    background-color: #666;
}

/* taskbar */
.taskbar {
    flex: none;
    display: flex;
    height: 60px;
    background-color: #cce0e7;
    color: #111;
}

.start {
    width: 73px;
    display: flex;
    align-items: center;
    justify-content: center;
}

.search {
    width: 514px;
    display: flex;
    align-items: center;
    gap: 16px;
    padding-left: 14px;
    background-color: white;
    border: 2px solid #c9c9c9;
}

.search input {
    flex: 1;
    height: 40px;
    font-size: 24px;
    outline: none;
}

.search input::placeholder {
    color: #222;
}

.app {
    position: relative;
    width: 75px;
    display: flex;
    align-items: center;
    justify-content: center;
}

.app.open::after {
    content: "";
    position: absolute;
    left: 7px;
    right: 7px;
    bottom: 0;
    height: 3px;
    background-color: #27b4cf;
}

.app.current {
    background-color: #e8f1f4;
}

.app.current::after {
    left: 0;
    right: 0;
}

.ps {
    width: 34px;
    height: 33px;
    border: 2px solid #00c8ff;
    background-color: #001d26;
    color: #00c8ff;
    font-size: 19px;
    line-height: 28px;
}

.tray {
    display: flex;
    align-items: center;
    gap: 13px;
    margin-left: auto;
    margin-right: 6px;
    padding-right: 19px;
    border-right: 1px solid #9fb0b8;
}

.ime {
    font-size: 20px;
}

.clock {
    display: flex;
    flex-direction: column;
    align-items: center;
    width: 106px;
    padding-bottom: 3px;
    font-size: 19px;
    line-height: 28px;
}

.notice {
    position: relative;
    padding: 0 12px 0 8px;
}

.badge {
    position: absolute;
    right: 0;
    top: 11px;
    width: 24px;
    height: 24px;
    border: 1px solid #888;
    border-radius: 50%;
    background-color: #ccd2d4;
    font-size: 16px;
    line-height: 22px;
    font-weight: 600;
}

/* watermark */
.brand {
    position: absolute;
    right: 119px;
    bottom: 52px;
    width: 384px;
    color: white;
    opacity: 0.75;
    white-space: nowrap;
    pointer-events: none;
    filter: drop-shadow(0 0 2px #888);
}

.brand-row {
    display: flex;
    align-items: flex-end;
    height: 130px;
}

.brand-latin {
    width: 129px;
    font-family: Roboto, sans-serif;
    font-weight: 900;
    font-size: 90px;
    line-height: 82px;
}

.paw {
    position: relative;
    width: 122px;
}

.paw > span {
    position: absolute;
    left: 28px;
    bottom: 10px;
    color: #b4b4b4;
    font-family: Roboto, sans-serif;
    font-weight: 500;
    font-size: 56px;
    line-height: 56px;
}

.brand-cn {
    font-weight: 900;
    font-size: 64px;
    line-height: 80px;
}

.brand-url {
    display: block;
    font-size: 45px;
    line-height: 48px;
}
```
